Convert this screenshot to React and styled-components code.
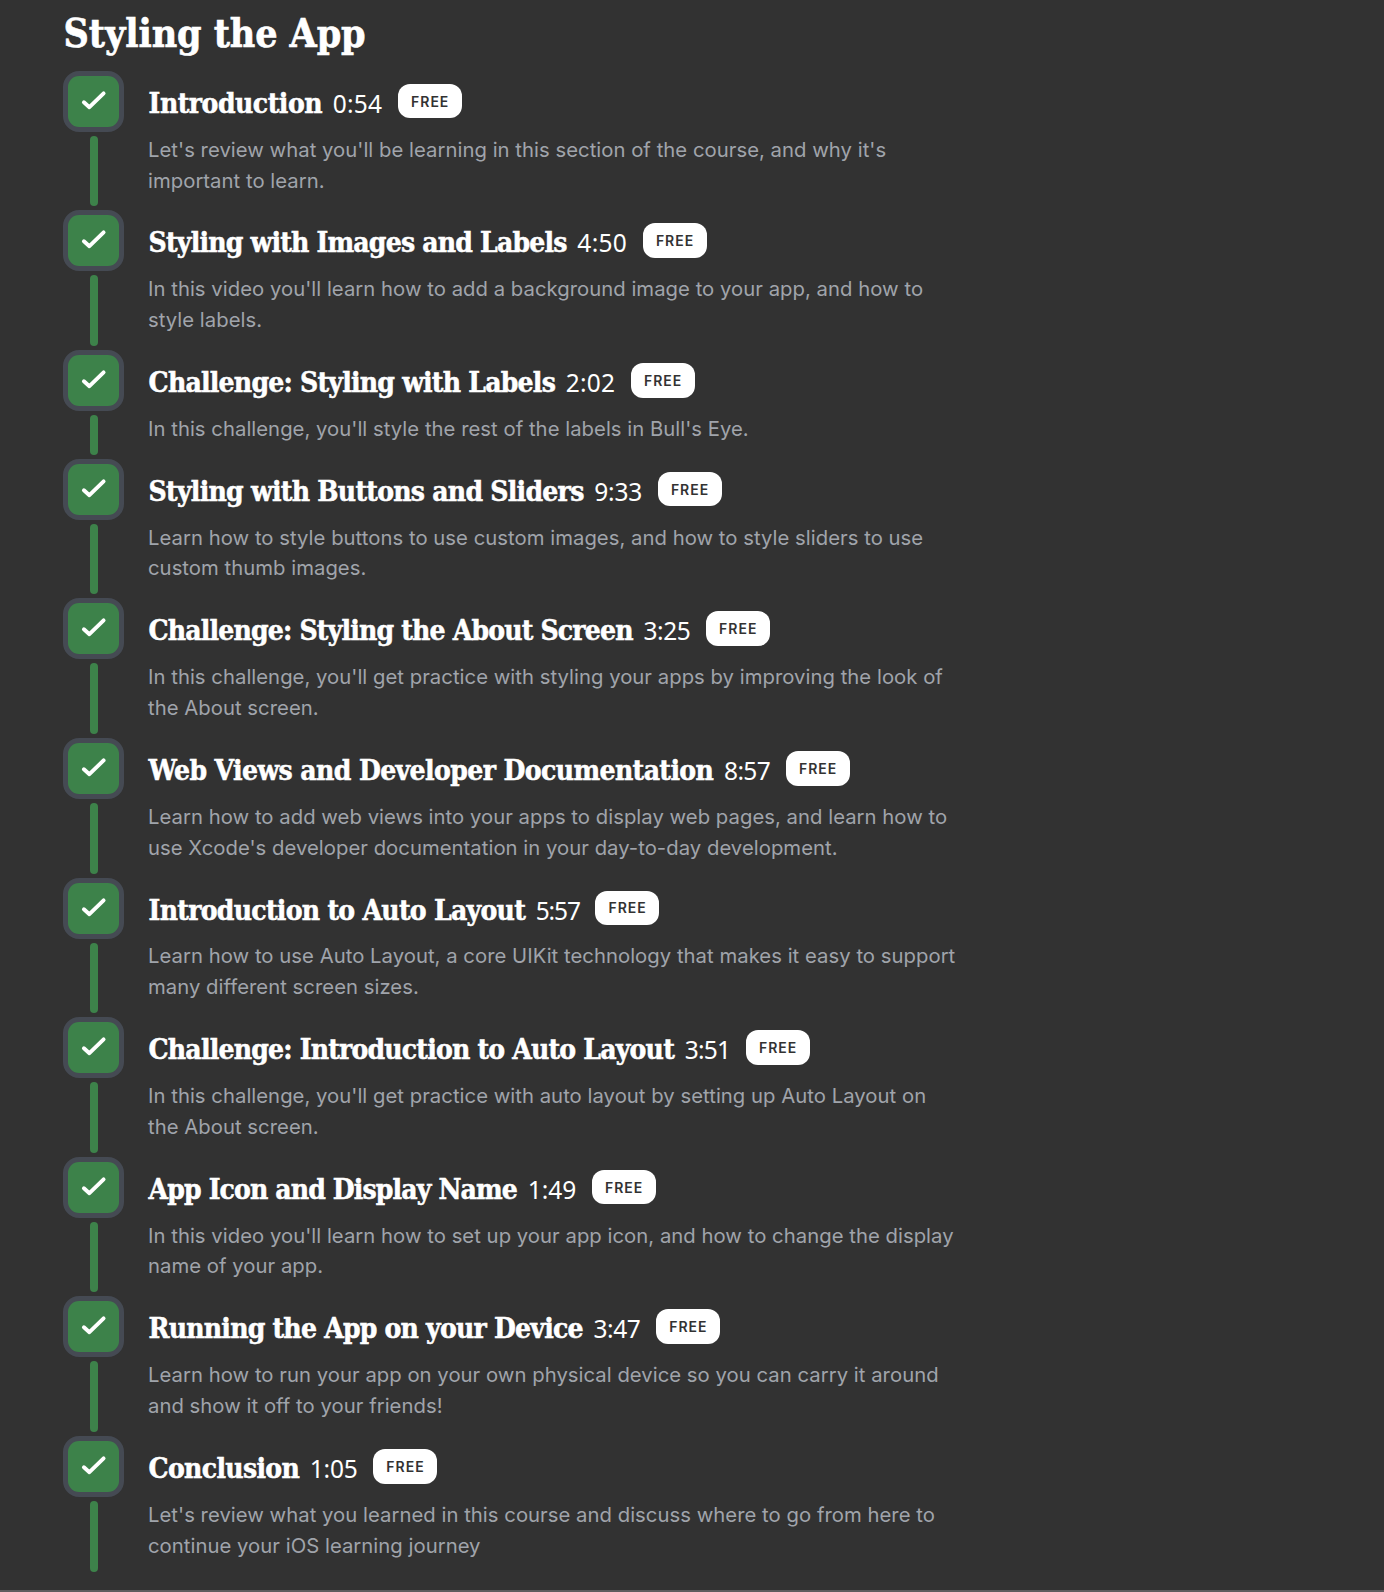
import React from "react";
import styled, { createGlobalStyle } from "styled-components";

const GlobalStyle = createGlobalStyle`
  * { box-sizing: border-box; }
  body { margin: 0; background: #323232; }
`;

const Page = styled.main`
  height: 1592px;
  padding: 0 0 0 63px;
  overflow: hidden;
  display: flex;
  flex-direction: column;
  background: #323232;
  border-bottom: 2px solid #5e5c5f;
  font-family: Inter, "Liberation Sans", sans-serif;
`;

const Heading = styled.h1`
  flex: none;
  height: 70.8px;
  margin: 0;
  padding-left: 0.6px;
  color: #fff;
  font: bold 39px/66px "DejaVu Serif Condensed", "DejaVu Serif", serif;
  font-stretch: condensed;
  letter-spacing: -0.1px;
  -webkit-text-stroke: 0.6px #fff;
`;

const List = styled.ol`
  list-style: none;
  margin: 0;
  padding: 0;
`;

const Row = styled.li`
  display: flex;
  gap: 24px;
`;

const Rail = styled.div`
  width: 61px;
  display: flex;
  flex-direction: column;
  align-items: center;
`;

const CheckBox = styled.div`
  flex: none;
  width: 61px;
  height: 61px;
  border: 5px solid #454a53;
  border-radius: 16px;
  background: #454a53;
`;

const CheckFill = styled.div`
  width: 51px;
  height: 51px;
  border-radius: 11px;
  background: #3d824a;

  svg { display: block; }
`;

const Connector = styled.div`
  flex: 1;
  width: 8px;
  margin: 4px 0 4px 1px;
  border-radius: 4px;
  background: #3d824a;
`;

const Body = styled.div`
  width: 812px;
  padding: 13px 0 14px;
`;

const TitleLine = styled.div`
  height: 50.8px;
  display: flex;
  align-items: flex-start;
  white-space: nowrap;
  color: #fff;
`;

const Title = styled.h2`
  margin: 0;
  padding-left: 0.6px;
  font: bold 28px/39px "DejaVu Serif Condensed", "DejaVu Serif", serif;
  font-stretch: condensed;
  letter-spacing: ${(p) => p.$tracking}px;
  -webkit-text-stroke: 0.5px #fff;
`;

const Duration = styled.span`
  margin: 0 15.4px 0 10.7px;
  font: 24.5px/40px "Noto Sans", sans-serif;
  letter-spacing: ${(p) => p.$tracking}px;
`;

const Badge = styled.span`
  width: 64px;
  height: 34.6px;
  padding-left: 1px;
  display: flex;
  align-items: center;
  justify-content: center;
  border-radius: 12px;
  background: #fff;
  color: #323232;
  font-size: 14px;
  font-weight: 600;
  letter-spacing: 1px;
`;

const Description = styled.p`
  margin: 0;
  color: #a0a4ab;
  font-size: 20.3px;
  line-height: 30.9px;
  letter-spacing: 0.03px;
`;

const episodes = [
  { title: "Introduction", tracking: -0.5, time: "0:54", timeTracking: 0.25, text: "Let's review what you'll be learning in this section of the course, and why it's important to learn." },
  { title: "Styling with Images and Labels", tracking: -0.8, time: "4:50", timeTracking: 0.3, text: "In this video you'll learn how to add a background image to your app, and how to style labels." },
  { title: "Challenge: Styling with Labels", tracking: -0.77, time: "2:02", timeTracking: 0.22, text: "In this challenge, you'll style the rest of the labels in Bull's Eye." },
  { title: "Styling with Buttons and Sliders", tracking: -0.74, time: "9:33", timeTracking: -0.18, text: "Learn how to style buttons to use custom images, and how to style sliders to use custom thumb images." },
  { title: "Challenge: Styling the About Screen", tracking: -0.82, time: "3:25", timeTracking: -0.4, text: "In this challenge, you'll get practice with styling your apps by improving the look of the About screen." },
  { title: "Web Views and Developer Documentation", tracking: -0.6, time: "8:57", timeTracking: -0.6, text: "Learn how to add web views into your apps to display web pages, and learn how to use Xcode's developer documentation in your day-to-day development." },
  { title: "Introduction to Auto Layout", tracking: -0.72, time: "5:57", timeTracking: -1.15, text: "Learn how to use Auto Layout, a core UIKit technology that makes it easy to support many different screen sizes." },
  { title: "Challenge: Introduction to Auto Layout", tracking: -0.8, time: "3:51", timeTracking: -0.75, text: "In this challenge, you'll get practice with auto layout by setting up Auto Layout on the About screen." },
  { title: "App Icon and Display Name", tracking: -0.87, time: "1:49", timeTracking: 0, text: "In this video you'll learn how to set up your app icon, and how to change the display name of your app." },
  { title: "Running the App on your Device", tracking: -0.78, time: "3:47", timeTracking: -0.4, text: "Learn how to run your app on your own physical device so you can carry it around and show it off to your friends!" },
  { title: "Conclusion", tracking: -0.68, time: "1:05", timeTracking: -0.2, text: "Let's review what you learned in this course and discuss where to go from here to continue your iOS learning journey" },
];

function Check() {
  return (
    <svg width="51" height="51" viewBox="0 0 51 51" fill="none">
      <path d="M15.9 26.3 21.4 31.2 35.6 17.4" stroke="#fff" strokeWidth="3.9" strokeLinecap="round" strokeLinejoin="round" />
    </svg>
  );
}

export default function App() {
  return (
    <>
      <GlobalStyle />
      <Page>
        <Heading>Styling the App</Heading>
        <List>
          {episodes.map((e) => (
            <Row key={e.title}>
              <Rail>
                <CheckBox><CheckFill><Check /></CheckFill></CheckBox>
                <Connector />
              </Rail>
              <Body>
                <TitleLine>
                  <Title $tracking={e.tracking}>{e.title}</Title>
                  <Duration $tracking={e.timeTracking}>{e.time}</Duration>
                  <Badge>FREE</Badge>
                </TitleLine>
                <Description>{e.text}</Description>
              </Body>
            </Row>
          ))}
        </List>
      </Page>
    </>
  );
}
